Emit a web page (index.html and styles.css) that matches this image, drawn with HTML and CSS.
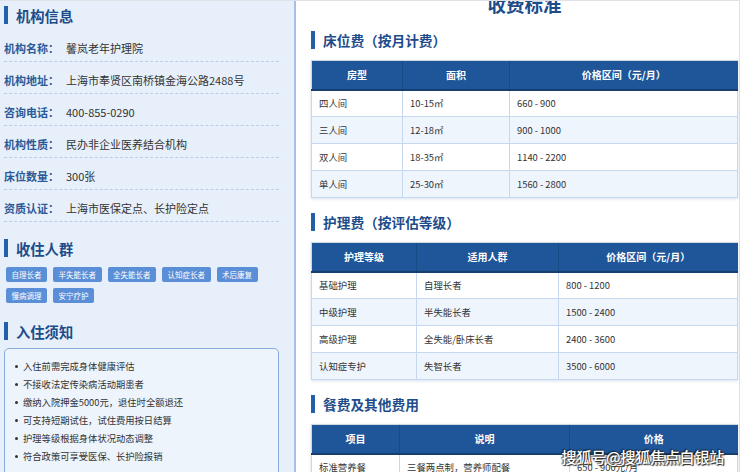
FILE: index.html
```html
<!DOCTYPE html>
<html lang="zh-CN">
<head>
<meta charset="utf-8">
<title>馨岚老年护理院 收费标准</title>
<link rel="stylesheet" href="styles.css">
</head>
<body>
<div class="page">
  <aside class="side">
    <h2 class="sec-title">机构信息</h2>
    <dl class="info">
      <div class="info-row"><dt>机构名称：</dt><dd>馨岚老年护理院</dd></div>
      <div class="info-row"><dt>机构地址：</dt><dd>上海市奉贤区南桥镇金海公路2488号</dd></div>
      <div class="info-row"><dt>咨询电话：</dt><dd>400-855-0290</dd></div>
      <div class="info-row"><dt>机构性质：</dt><dd>民办非企业医养结合机构</dd></div>
      <div class="info-row"><dt>床位数量：</dt><dd>300张</dd></div>
      <div class="info-row"><dt>资质认证：</dt><dd>上海市医保定点、长护险定点</dd></div>
    </dl>

    <h2 class="sec-title gap-top">收住人群</h2>
    <div class="tags">
      <span class="tag">自理长者</span>
      <span class="tag">半失能长者</span>
      <span class="tag">全失能长者</span>
      <span class="tag">认知症长者</span>
      <span class="tag">术后康复</span>
      <span class="tag">慢病调理</span>
      <span class="tag">安宁疗护</span>
    </div>

    <h2 class="sec-title gap-top2">入住须知</h2>
    <ul class="notice">
      <li>入住前需完成身体健康评估</li>
      <li>不接收法定传染病活动期患者</li>
      <li>缴纳入院押金5000元，退住时全额退还</li>
      <li>可支持短期试住，试住费用按日结算</li>
      <li>护理等级根据身体状况动态调整</li>
      <li>符合政策可享受医保、长护险报销</li>
    </ul>
  </aside>

  <main class="main">
    <h1 class="page-title">收费标准</h1>

    <h3 class="sub-title first">床位费（按月计费）</h3>
    <table class="fee">
      <colgroup><col class="c1a"><col class="c1b"><col></colgroup>
      <thead><tr><th>房型</th><th>面积</th><th>价格区间（元/月）</th></tr></thead>
      <tbody>
        <tr><td>四人间</td><td>10-15㎡</td><td>660 - 900</td></tr>
        <tr><td>三人间</td><td>12-18㎡</td><td>900 - 1000</td></tr>
        <tr><td>双人间</td><td>18-35㎡</td><td>1140 - 2200</td></tr>
        <tr><td>单人间</td><td>25-30㎡</td><td>1560 - 2800</td></tr>
      </tbody>
    </table>

    <h3 class="sub-title">护理费（按评估等级）</h3>
    <table class="fee">
      <colgroup><col class="c2a"><col class="c2b"><col></colgroup>
      <thead><tr><th>护理等级</th><th>适用人群</th><th>价格区间（元/月）</th></tr></thead>
      <tbody>
        <tr><td>基础护理</td><td>自理长者</td><td>800 - 1200</td></tr>
        <tr><td>中级护理</td><td>半失能长者</td><td>1500 - 2400</td></tr>
        <tr><td>高级护理</td><td>全失能/卧床长者</td><td>2400 - 3600</td></tr>
        <tr><td>认知症专护</td><td>失智长者</td><td>3500 - 6000</td></tr>
      </tbody>
    </table>

    <h3 class="sub-title">餐费及其他费用</h3>
    <table class="fee">
      <colgroup><col class="c3a"><col class="c3b"><col></colgroup>
      <thead><tr><th>项目</th><th>说明</th><th>价格</th></tr></thead>
      <tbody>
        <tr><td>标准营养餐</td><td>三餐两点制，营养师配餐</td><td>650 - 900元/月</td></tr>
        <tr><td>特殊膳食</td><td>糖尿病餐、流质餐等</td><td>另加100 - 300元/月</td></tr>
      </tbody>
    </table>
  </main>

  <div class="watermark">搜狐号@搜狐焦点白银站</div>
</div>
</body>
</html>
```

FILE: styles.css
```css
* { box-sizing: border-box; margin: 0; padding: 0; }

html, body {
  width: 740px;
  height: 472px;
  overflow: hidden;
  background: #ffffff;
}

body {
  font-family: "Noto Sans CJK SC", "Noto Sans", sans-serif;
  color: #333333;
}

.page {
  position: relative;
  display: flex;
  width: 740px;
  height: 472px;
  overflow: hidden;
  border-top: 1px solid #dfe3e8;
}

/* ---------- left panel ---------- */
.side {
  width: 296px;
  flex: none;
  background: #e7f0fa;
  border-right: 2px solid #a4c0e4;
  padding: 5px 15px 0 4px;
}

.sec-title {
  display: flex;
  align-items: center;
  gap: 8px;
  height: 18px;
  font-size: 14.3px;
  font-weight: 700;
  color: #1d4c8a;
}
.sec-title::before {
  content: "";
  flex: none;
  width: 4px;
  height: 18px;
  background: #2160a8;
}
.gap-top { margin-top: 17px; }
.gap-top2 { margin-top: 19px; }

.info { margin-top: 6px; }
.info-row {
  display: flex;
  padding: 11px 0 5px;
  line-height: 15px;
  font-size: 11px;
  border-bottom: 1px dashed #b7cde9;
}
.info-row dt {
  width: 62px;
  flex: none;
  font-weight: 700;
  color: #2a5a98;
}
.info-row dd { color: #333333; }

.tags {
  display: flex;
  flex-wrap: wrap;
  gap: 6px 6px;
  margin-top: 10px;
  padding-left: 2px;
  width: 262px;
}
.tag {
  height: 15px;
  line-height: 15px;
  padding: 0 5.5px;
  font-size: 7.5px;
  color: #ffffff;
  background: #5a8ed6;
  border-radius: 2px;
}

.notice {
  list-style: none;
  margin-top: 8px;
  padding: 8px 10px 10px;
  border: 1px solid #88abdb;
  border-radius: 5px;
  background: #edf4fc;
}
.notice li {
  display: flex;
  align-items: center;
  gap: 5px;
  height: 18px;
  font-size: 9.3px;
  color: #333333;
}
.notice li::before {
  content: "";
  flex: none;
  width: 3px;
  height: 3px;
  border-radius: 50%;
  background: #333333;
}

/* ---------- right panel ---------- */
.main {
  flex: 1;
  padding: 0 1px 0 15px;
  border-right: 1px solid #d6e4f5;
}

.page-title {
  margin-top: -7.5px;
  line-height: 20px;
  font-size: 18.5px;
  font-weight: 700;
  text-align: center;
  color: #1d4c8a;
}

.sub-title {
  display: flex;
  align-items: center;
  gap: 8px;
  height: 18px;
  margin: 15px 0 11px;
  font-size: 13.7px;
  font-weight: 700;
  color: #1d4c8a;
}
.sub-title.first { margin-top: 17.5px; }
.sub-title::before {
  content: "";
  flex: none;
  width: 4px;
  height: 18px;
  background: #2160a8;
}

.fee {
  width: 100%;
  table-layout: fixed;
  border-collapse: collapse;
  font-size: 9.4px;
  color: #333333;
  box-shadow: 0 1px 3px rgba(40, 90, 160, 0.18);
}
.c1a { width: 91px; }
.c1b { width: 107px; }
.c2a { width: 105px; }
.c2b { width: 142px; }
.c3a { width: 88px; }
.c3b { width: 170px; }

.fee th {
  height: 29px;
  padding: 0;
  background: #1f5699;
  color: #ffffff;
  font-size: 10px;
  font-weight: 700;
  text-align: center;
  border-top: 1px solid #d0d8e2;
  border-left: 1px solid #184a86;
  border-bottom: 2px solid #163f70;
}
.fee th:first-child { border-left: 1px solid #c6d8f0; }

.fee td {
  height: 27px;
  padding: 0 0 0 7px;
  text-align: left;
  border: 1px solid #c6d8f0;
  background: #ffffff;
}
.fee tbody tr:nth-child(even) td { background: #eef5fd; }

/* ---------- overlay watermark ---------- */
.watermark {
  position: absolute;
  right: 16px;
  bottom: 5px;
  font-size: 15px;
  font-weight: 500;
  color: #ffffff;
  letter-spacing: -0.2px;
  text-shadow: 0 0 2px #222, 1px 1px 1px #222, -1px -1px 1px rgba(0,0,0,0.5);
}
```
